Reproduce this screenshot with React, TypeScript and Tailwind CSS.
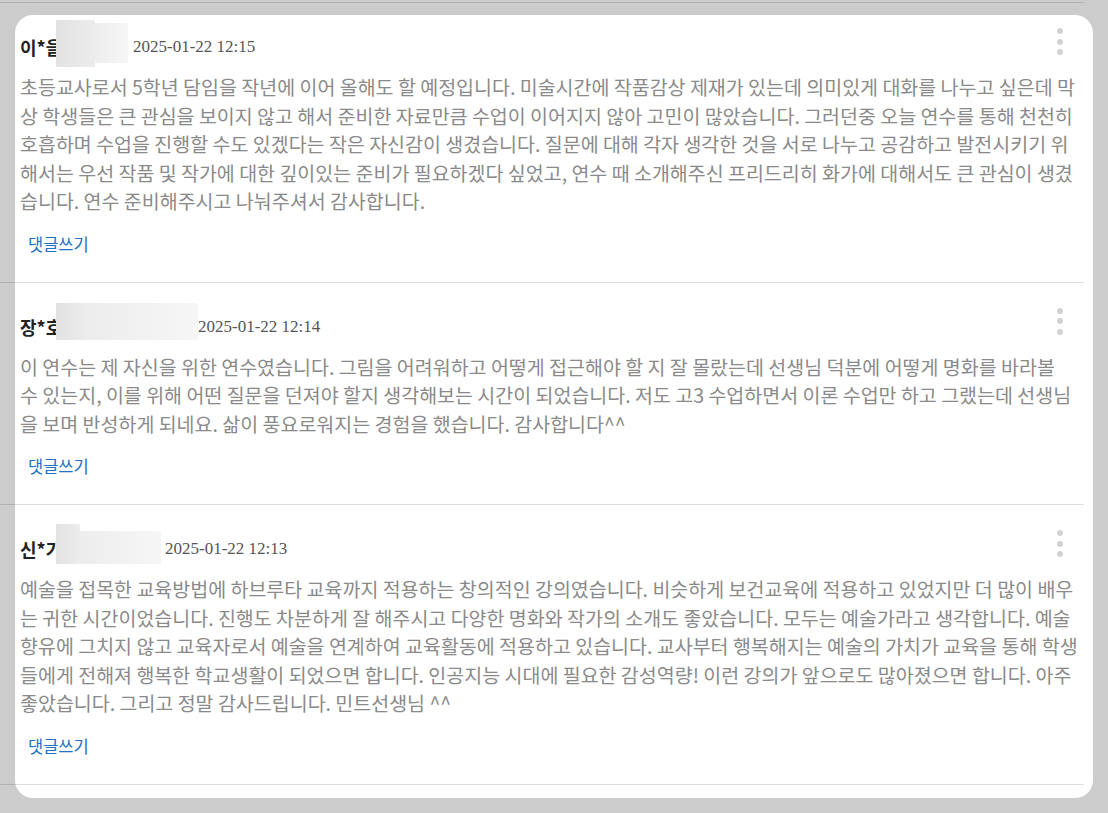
import React from "react";

type Comment = {
  name: string;
  boxA: { w: number; h: number; mt: number };
  boxB: { w: number; h: number; mt: number };
  dateMl: number;
  date: string;
  body: string[];
};

const comments: Comment[] = [
  {
    name: "이*을",
    boxA: { w: 39, h: 47, mt: -12 },
    boxB: { w: 33, h: 40, mt: -9 },
    dateMl: 5,
    date: "2025-01-22 12:15",
    body: [
      "초등교사로서 5학년 담임을 작년에 이어 올해도 할 예정입니다. 미술시간에 작품감상 제재가 있는데 의미있게 대화를 나누고 싶은데 막상 학생들은 큰 관심을 보이지 않고 해서 준비한 자료만큼 수업이 이어지지 않아 고민이 많았습니다. 그러던중 오늘 연수를 통해 천천히 호흡하며 수업을 진행할 수도 있겠다는 작은 자신감이 생겼습니다. 질문에 대해 각자 생각한 것을 서로 나누고 공감하고 발전시키기 위해서는 우선 작품 및 작가에 대한 깊이있는 준비가 필요하겠다 싶었고, 연수 때 소개해주신 프리드리히 화가에 대해서도 큰 관심이 생겼습니다. 연수 준비해주시고 나눠주셔서 감사합니다.",
    ],
  },
  {
    name: "장*호",
    boxA: { w: 32, h: 37, mt: -9 },
    boxB: { w: 110, h: 37, mt: -9 },
    dateMl: 0,
    date: "2025-01-22 12:14",
    body: [
      "이 연수는 제 자신을 위한 연수였습니다. 그림을 어려워하고 어떻게 접근해야 할 지 잘 몰랐는데 선생님 덕분에 어떻게 명화를 바라볼",
      "수 있는지, 이를 위해 어떤 질문을 던져야 할지 생각해보는 시간이 되었습니다. 저도 고3 수업하면서 이론 수업만 하고 그랬는데 선생님",
      "을 보며 반성하게 되네요. 삶이 풍요로워지는 경험을 했습니다. 감사합니다^^",
    ],
  },
  {
    name: "신*가",
    boxA: { w: 24, h: 40, mt: -10 },
    boxB: { w: 81, h: 33, mt: -3 },
    dateMl: 4,
    date: "2025-01-22 12:13",
    body: [
      "예술을 접목한 교육방법에 하브루타 교육까지 적용하는 창의적인 강의였습니다. 비슷하게 보건교육에 적용하고 있었지만 더 많이 배우는 귀한 시간이었습니다. 진행도 차분하게 잘 해주시고 다양한 명화와 작가의 소개도 좋았습니다. 모두는 예술가라고 생각합니다. 예술향유에 그치지 않고 교육자로서 예술을 연계하여 교육활동에 적용하고 있습니다. 교사부터 행복해지는 예술의 가치가 교육을 통해 학생들에게 전해져 행복한 학교생활이 되었으면 합니다. 인공지능 시대에 필요한 감성역량! 이런 강의가 앞으로도 많아졌으면 합니다. 아주 좋았습니다. 그리고 정말 감사드립니다. 민트선생님 ^^",
    ],
  },
];

function Dots() {
  return (
    <div className="flex flex-col gap-[4.5px] -mt-[4px] mr-[21px]">
      <span className="block w-[6px] h-[6px] rounded-full bg-[#d2d2d2]" />
      <span className="block w-[6px] h-[6px] rounded-full bg-[#d2d2d2]" />
      <span className="block w-[6px] h-[6px] rounded-full bg-[#d2d2d2]" />
    </div>
  );
}

function Row({ c }: { c: Comment }) {
  return (
    <div className="border-b border-[#00000021] pt-[29px] pb-[27px] pl-[20px]">
      <div className="flex items-start justify-between h-[30px]">
        <div className="flex items-start">
          <span className="block w-[36px] whitespace-nowrap text-[18px] leading-[30px] font-bold text-[#222] font-['Noto_Sans_CJK_KR',sans-serif]">
            {c.name}
          </span>
          <span
            className="block bg-gradient-to-r from-[#e2e2e2] to-[#ececec]"
            style={{ width: c.boxA.w, height: c.boxA.h, marginTop: c.boxA.mt }}
          />
          <span
            className="block bg-gradient-to-r from-[#ededed] to-[#f6f6f6]"
            style={{ width: c.boxB.w, height: c.boxB.h, marginTop: c.boxB.mt }}
          />
          <span
            className="text-[17px] leading-[30px] text-[#555] font-['Liberation_Serif',serif]"
            style={{ marginLeft: c.dateMl }}
          >
            {c.date}
          </span>
        </div>
        <Dots />
      </div>
      <p className="mt-[11px] w-[1064px] text-[19.5px] leading-[28.5px] text-[#8a8a8a] break-all font-['Noto_Sans_CJK_KR',sans-serif]">
        {c.body.map((seg, i) => (
          <React.Fragment key={i}>
            {i > 0 && <br />}
            {seg}
          </React.Fragment>
        ))}
      </p>
      <a className="block mt-[17px] pl-[8px] text-[16.5px] leading-[22px] text-[#2170c4] font-['Noto_Sans_CJK_KR',sans-serif]">
        댓글쓰기
      </a>
    </div>
  );
}

export default function App() {
  return (
    <div className="w-[1108px] h-[813px] bg-[#cccccc] pt-[15px] pl-[15px] overflow-hidden">
      <div className="flow-root w-[1078px] h-[783px] rounded-[18px] bg-white">
        <div className="-ml-[15px] -mt-[13px] w-[1084px] border-t border-[#00000021]">
          {comments.map((c) => (
            <Row key={c.date} c={c} />
          ))}
        </div>
      </div>
    </div>
  );
}
